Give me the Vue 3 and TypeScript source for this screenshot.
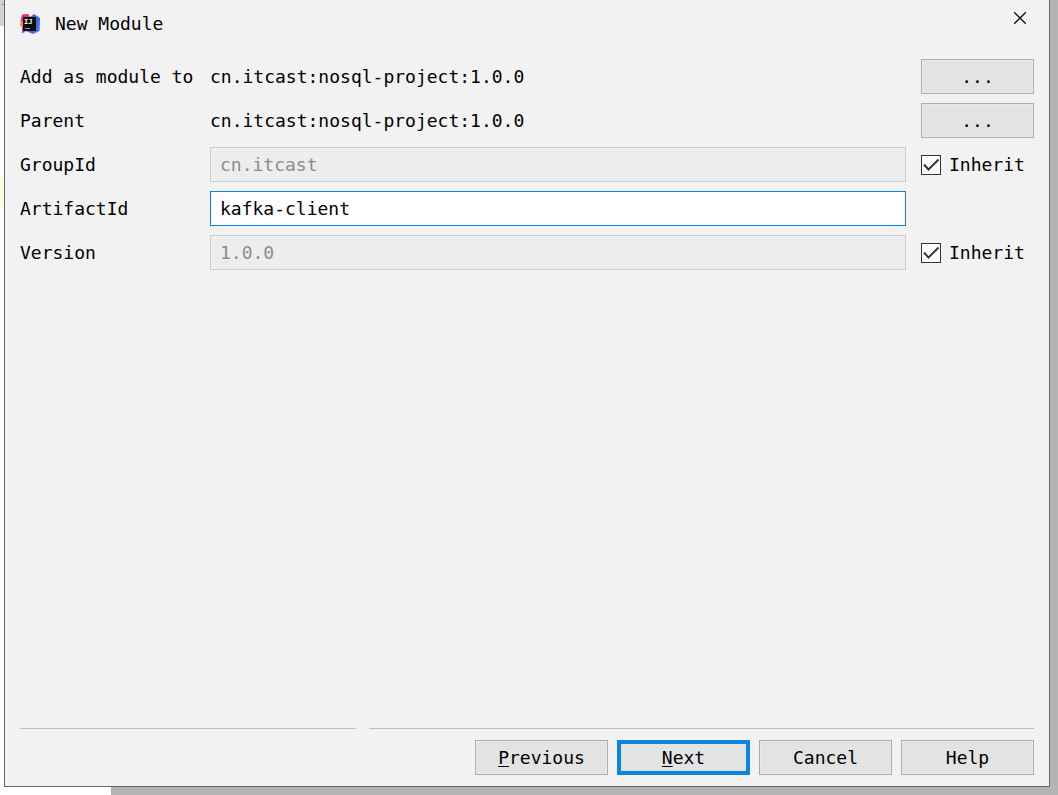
<script setup lang="ts">
import { ref } from 'vue'

const project = 'cn.itcast:nosql-project:1.0.0'
const groupId = ref('cn.itcast')
const artifactId = ref('kafka-client')
const version = ref('1.0.0')
const inheritGroup = ref(true)
const inheritVersion = ref(true)
</script>

<template>
  <div class="desktop">
    <main class="dialog">
      <header class="titlebar">
        <svg class="logo" viewBox="0 0 20 20" aria-hidden="true">
          <defs>
            <linearGradient id="blue" x1="0" y1="0" x2="1" y2="1">
              <stop offset="0" stop-color="#2f7df6" />
              <stop offset="0.5" stop-color="#4a63e0" />
              <stop offset="1" stop-color="#3f7cf0" />
            </linearGradient>
            <linearGradient id="red" x1="0" y1="0" x2="1" y2="1">
              <stop offset="0" stop-color="#fb2f6c" />
              <stop offset="1" stop-color="#e22b72" />
            </linearGradient>
          </defs>
          <path d="M9 4 14 0 20 4 19.5 17 13 20 6 17Z" fill="url(#blue)" />
          <path d="M0.5 7 2 0.5 8 0 12 5 6 13Z" fill="url(#red)" />
          <path d="M0.5 7.5 4 7.5 5 14 2 13.5 0 11Z" fill="#fb8726" />
          <path d="M2 13 8 14 6 17 2 19.5Z" fill="#a83fd0" />
          <rect x="3" y="3" width="13" height="14" fill="#0c0c0c" />
          <text class="logo-text" x="4" y="10">IJ</text>
          <rect x="5" y="14" width="5" height="1" fill="#999" />
        </svg>
        <h1 class="title">New Module</h1>
        <button class="close" type="button" aria-label="Close">
          <svg viewBox="0 0 12 12" aria-hidden="true">
            <path d="M0 0 12 12M12 0 0 12" fill="none" stroke="#111" stroke-width="1.3" />
          </svg>
        </button>
      </header>

      <form class="form" @submit.prevent>
        <div class="row">
          <span>Add as module to</span>
          <span class="value">{{ project }}</span>
          <button class="btn" type="button" aria-label="Choose aggregator">...</button>
        </div>
        <div class="row">
          <span>Parent</span>
          <span class="value">{{ project }}</span>
          <button class="btn" type="button" aria-label="Choose parent">...</button>
        </div>
        <div class="row">
          <label for="group">GroupId</label>
          <input id="group" v-model="groupId" class="field" type="text" :disabled="inheritGroup" />
          <label class="check">
            <input v-model="inheritGroup" type="checkbox" />
            <span>Inherit</span>
          </label>
        </div>
        <div class="row">
          <label for="artifact">ArtifactId</label>
          <input id="artifact" v-model="artifactId" class="field active" type="text" />
        </div>
        <div class="row">
          <label for="version">Version</label>
          <input id="version" v-model="version" class="field" type="text" :disabled="inheritVersion" />
          <label class="check">
            <input v-model="inheritVersion" type="checkbox" />
            <span>Inherit</span>
          </label>
        </div>
      </form>

      <footer>
        <div class="rules">
          <hr />
          <hr />
        </div>
        <div class="actions">
          <button class="btn" type="button"><u>P</u>revious</button>
          <button class="btn primary" type="button"><u>N</u>ext</button>
          <button class="btn" type="button">Cancel</button>
          <button class="btn" type="button">Help</button>
        </div>
      </footer>
    </main>
  </div>
</template>

<style>
body {
  margin: 0;
}
</style>

<style scoped>
.desktop,
.desktop * {
  box-sizing: border-box;
}

.desktop {
  display: flex;
  min-height: 100vh;
  padding: 0 8px 8px 4px;
  background:
    linear-gradient(#8c8c8c, #8c8c8c) 2px 4px / 2px 1px no-repeat,
    linear-gradient(#d2d2d2, #d2d2d2) 0 0 / 4px 26px no-repeat,
    linear-gradient(#fffde0, #fffde0) 0 176px / 4px 30px no-repeat,
    linear-gradient(#fff, #fff) 0 0 / 111px 100% no-repeat,
    #b4b4b4;
  color: #000;
  font-family: "DejaVu Sans Mono", monospace;
  font-size: 18px;
  line-height: 24px;
}

.dialog {
  display: flex;
  flex: 1;
  flex-direction: column;
  min-width: 0;
  padding: 0 15px 11px;
  border: 1px solid #666;
  border-top: 0;
  background: #f2f2f2;
}

.titlebar {
  display: flex;
  align-items: flex-start;
  height: 59px;
}

.logo {
  width: 20px;
  height: 20px;
  margin-top: 14px;
}

.logo-text {
  fill: #fff;
  font-size: 7px;
  font-weight: 700;
}

.title {
  flex: 1;
  margin: 12px 0 0 15px;
  font-size: 18px;
  font-weight: 400;
}

.close {
  display: flex;
  padding: 6px 8px 6px 6px;
  margin-top: 6px;
  border: 0;
  background: none;
}

.close svg {
  width: 12px;
  height: 12px;
}

.form {
  display: flex;
  flex: 1;
  flex-direction: column;
  gap: 9px;
}

.row {
  display: grid;
  grid-template-columns: 190px minmax(0, 1fr) 113px;
  align-items: center;
  height: 35px;
}

.value {
  overflow: hidden;
  white-space: nowrap;
}

.field {
  justify-self: stretch;
  min-width: 0;
  height: 35px;
  padding: 0 9px;
  margin-right: 15px;
  border: 1px solid #ccc;
  border-radius: 0;
  outline: 0;
  background: #fff;
  color: #000;
  font: inherit;
}

.field:disabled {
  background: #ededed;
  color: #8c8c8c;
}

.field.active {
  border-color: #0a84dc;
}

.check {
  display: flex;
  align-items: center;
  gap: 8px;
}

.check input {
  appearance: none;
  width: 20px;
  height: 20px;
  margin: 0;
  border: 1px solid #333;
  background: #fff;
}

.check input:checked {
  background: #fff url("data:image/svg+xml,%3Csvg xmlns='http://www.w3.org/2000/svg' viewBox='0 0 18 18'%3E%3Cpath d='M2 8.5 6.5 13.5 16.5 3.5' fill='none' stroke='%23333' stroke-width='1.9'/%3E%3C/svg%3E") center / 18px 18px no-repeat;
}

.btn {
  height: 35px;
  padding: 0;
  border: 1px solid #adadad;
  border-radius: 0;
  box-shadow: inset 0 0 0 1px #e9e9e9;
  background: #e3e3e3;
  color: #000;
  font: inherit;
}

.btn u {
  text-underline-offset: 2px;
}

.primary {
  border: 4px solid #0a84dc;
  box-shadow: none;
}

.rules {
  display: grid;
  grid-template-columns: 336fr 666fr;
  gap: 13px;
}

.rules hr {
  width: 100%;
  height: 1px;
  margin: 0;
  border: 0;
  background: #bebebe;
}

.actions {
  display: flex;
  justify-content: flex-end;
  gap: 9px;
  margin-top: 11px;
}

.actions .btn {
  width: 133px;
}
</style>
